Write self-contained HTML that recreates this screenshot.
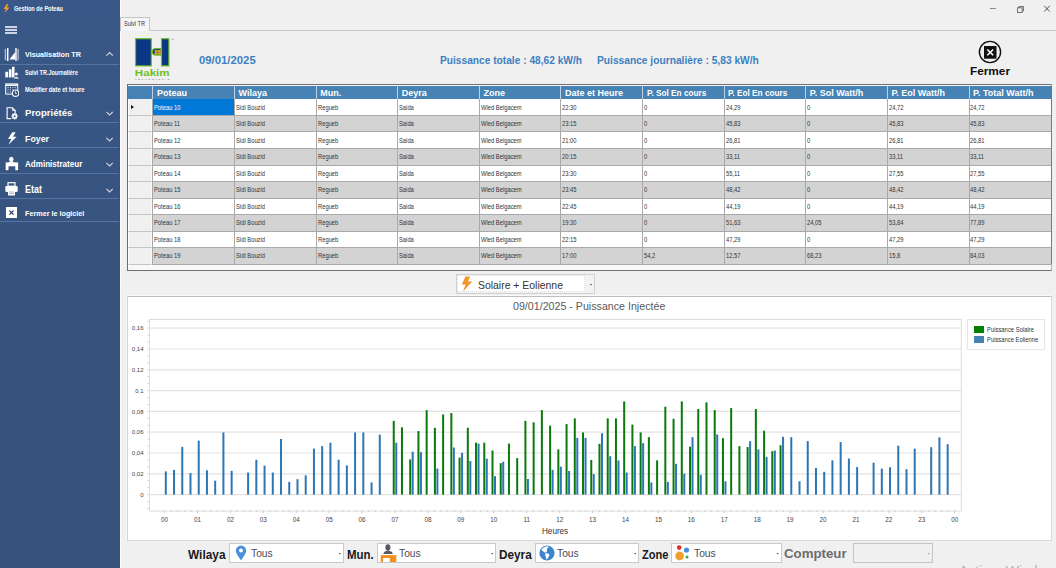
<!DOCTYPE html><html><head><meta charset="utf-8"><style>
*{margin:0;padding:0;box-sizing:border-box}
html,body{width:1056px;height:568px;overflow:hidden;background:#f0f0f0;font-family:"Liberation Sans",sans-serif}
.t{position:absolute;white-space:nowrap;line-height:1;transform-origin:0 0}
.a{position:absolute}
#sb{position:absolute;left:0;top:0;width:119.6px;height:568px;background:linear-gradient(180deg,#395887 0%,#37547f 40%,#36537e 100%)}
.sep{position:absolute;left:0;width:119px;height:1px;background:#5573a3}
.th{position:absolute;top:85.5px;height:13.9px;background:#4682b4;border-left:1px solid #bcd2e6}
.td{position:absolute;height:16.53px;border-left:1px solid #a9a9a9;border-bottom:1px solid #a9a9a9}
.td.odd{background:#fff}
.td.even{background:#d3d3d3}
.td.sel{background:#0078d7}
.rh{position:absolute;left:128px;width:24.3px;height:16.53px;background:#f0f0f0;border-bottom:1px solid #c4c4c4;border-left:1px solid #fff;border-right:1px solid #f8f8f8}
.arr{position:absolute;left:2.3px;top:5.4px;width:0;height:0;border-top:2.7px solid transparent;border-bottom:2.7px solid transparent;border-left:3.4px solid #111}
.yl{font-family:"Liberation Sans",sans-serif;font-size:6px;fill:#444}
.xl{font-family:"Liberation Sans",sans-serif;font-size:6.3px;fill:#444}
.combo{position:absolute;background:#fff;border:1px solid #c9c9c9}
.dd{position:absolute;width:3px;height:2px;background:#444;clip-path:polygon(0 0,100% 0,50% 100%)}
</style></head><body><div id="sb"></div><svg class="a" style="left:3px;top:4px" width="7" height="9" viewBox="0 0 7 9"><path d="M3.8 0 L0.6 5 L3 5 L1.8 9 L6.4 3.6 L3.9 3.6 L5.2 0 Z" fill="#f0a030"/></svg><div class="t" style="left:14.00px;top:6.14px;font-size:6.8px;font-weight:bold;color:#ffffff;transform:scaleX(0.8208);">Gestion de Poteau</div><div class="a" style="left:5.2px;top:26.4px;width:11.4px;height:1.2px;background:#cdd5e2"></div><div class="a" style="left:5.2px;top:29.4px;width:11.4px;height:1.2px;background:#cdd5e2"></div><div class="a" style="left:5.2px;top:32.4px;width:11.4px;height:1.2px;background:#cdd5e2"></div><div class="sep" style="top:63.6px"></div><div class="sep" style="top:121.8px"></div><div class="sep" style="top:147.4px"></div><div class="sep" style="top:172.5px"></div><div class="sep" style="top:198.3px"></div><div class="sep" style="top:220.5px"></div><svg class="a" style="left:4px;top:47px" width="15" height="15" viewBox="0 0 15 15"><path d="M1.3 2 V13.2" stroke="#e6ebf3" stroke-width="0.9"/><path d="M3.7 1 V14" stroke="#fff" stroke-width="1.5"/><path d="M5.4 12.6 L11.3 5 V12.6 Z" fill="#fff"/><path d="M12 1 V14" stroke="#fff" stroke-width="1.4"/><path d="M14.1 2 V13.2" stroke="#e6ebf3" stroke-width="0.9"/></svg><div class="t" style="left:24.60px;top:51.00px;font-size:7.8px;font-weight:bold;color:#ffffff;transform:scaleX(0.9250);">Visualisation TR</div><svg class="a" style="left:105px;top:51px" width="9" height="6" viewBox="0 0 9 6"><path d="M1.4 4.6 L4.6 1.5 L7.8 4.6" fill="none" stroke="#d0d8e6" stroke-width="1.1"/></svg><svg class="a" style="left:4.5px;top:65.5px" width="14" height="13" viewBox="0 0 14 13"><rect x="0.3" y="5.8" width="2.8" height="5.6" fill="#fff"/><rect x="3.9" y="3.3" width="2.6" height="8.1" fill="#fff"/><rect x="7" y="0.8" width="2.5" height="10.6" fill="#fff"/><circle cx="11.4" cy="8" r="1.5" fill="#fff"/><path d="M8.6 12.4 Q11.4 9.6 14 12.4 Z" fill="#fff"/></svg><div class="t" style="left:24.60px;top:69.91px;font-size:6.6px;font-weight:bold;color:#ffffff;transform:scaleX(0.8305);">Suivi TR.Journalière</div><svg class="a" style="left:4.5px;top:82.5px" width="14" height="14" viewBox="0 0 14 14"><rect x="0.7" y="0.9" width="12" height="10.2" fill="none" stroke="#fff" stroke-width="1"/><path d="M0.7 2.2 H12.7" stroke="#fff" stroke-width="1.6"/><path d="M2.5 4.6 H3.6 M4.9 4.6 H6 M7.3 4.6 H8.4 M9.7 4.6 H10.8 M2.5 6.8 H3.6 M4.9 6.8 H6 M7.3 6.8 H8.4 M2.5 9 H3.6 M4.9 9 H6" stroke="#dfe6f0" stroke-width="0.9"/><circle cx="10.6" cy="10.2" r="3.2" fill="#37547f" stroke="#fff" stroke-width="1.1"/><path d="M10.5 8.4 V10.4 H12" stroke="#fff" stroke-width="0.8" fill="none"/></svg><div class="t" style="left:24.60px;top:86.07px;font-size:7px;font-weight:bold;color:#ffffff;transform:scaleX(0.8167);">Modifier date et heure</div><svg class="a" style="left:5.5px;top:106.5px" width="13" height="13" viewBox="0 0 13 13"><path d="M5.2 11.6 H1.1 V0.8 H6.4 L9.2 3.6 V6.2" fill="none" stroke="#fff" stroke-width="1.1"/><path d="M6.4 0.8 V3.6 H9.2" fill="none" stroke="#fff" stroke-width="0.8"/><g transform="translate(8.6 9.3)"><path d="M-0.6 -3.3 H0.6 L0.8 -2.4 L1.7 -2.9 L2.6 -2 L2.1 -1.1 L3.1 -0.8 V0.5 L2.1 0.8 L2.6 1.8 L1.7 2.7 L0.8 2.2 L0.6 3.2 H-0.6 L-0.8 2.2 L-1.7 2.7 L-2.6 1.8 L-2.1 0.8 L-3.1 0.5 V-0.8 L-2.1 -1.1 L-2.6 -2 L-1.7 -2.9 L-0.8 -2.4 Z" fill="#fff"/><circle r="1" fill="#37547f"/></g></svg><div class="t" style="left:24.60px;top:108.17px;font-size:9.6px;font-weight:bold;color:#ffffff;transform:scaleX(0.9982);">Propriétés</div><svg class="a" style="left:105px;top:110px" width="9" height="6" viewBox="0 0 9 6"><path d="M1.4 1.8 L4.6 4.9 L7.8 1.8" fill="none" stroke="#d0d8e6" stroke-width="1.1"/></svg><svg class="a" style="left:6.5px;top:131.8px" width="11" height="13" viewBox="0 0 11 13"><path d="M5.2 0.3 L1 7 L4.4 7 L1.4 12.7 L9.6 4.8 L6 4.8 L8.6 0.3 Z" fill="#fff"/></svg><div class="t" style="left:24.60px;top:134.51px;font-size:9.2px;font-weight:bold;color:#ffffff;transform:scaleX(0.9580);">Foyer</div><svg class="a" style="left:105px;top:136px" width="9" height="6" viewBox="0 0 9 6"><path d="M1.4 1.8 L4.6 4.9 L7.8 1.8" fill="none" stroke="#d0d8e6" stroke-width="1.1"/></svg><svg class="a" style="left:4.5px;top:156px" width="14" height="15" viewBox="0 0 14 15"><ellipse cx="6.3" cy="3.4" rx="2.2" ry="2.6" fill="#fff"/><path d="M2.8 6.8 Q6.3 4.3 9.8 6.8 Z" fill="#fff"/><rect x="0.7" y="6.4" width="12.4" height="3.9" fill="#fff"/><rect x="0.7" y="10" width="2.8" height="4.2" fill="#fff"/><rect x="10.3" y="10" width="2.8" height="4.2" fill="#fff"/></svg><div class="t" style="left:24.60px;top:159.61px;font-size:9.2px;font-weight:bold;color:#ffffff;transform:scaleX(0.8772);">Administrateur</div><svg class="a" style="left:105px;top:161px" width="9" height="6" viewBox="0 0 9 6"><path d="M1.4 1.8 L4.6 4.9 L7.8 1.8" fill="none" stroke="#d0d8e6" stroke-width="1.1"/></svg><svg class="a" style="left:5px;top:181.5px" width="13" height="14" viewBox="0 0 13 14"><rect x="3" y="0.7" width="7" height="3.5" fill="none" stroke="#fff" stroke-width="1.2"/><rect x="0.3" y="4" width="12.4" height="6" rx="1.2" fill="#fff"/><rect x="3" y="8.5" width="7" height="5" fill="#fff"/><path d="M4.2 10 H8.8 M4.2 11.7 H8.8" stroke="#8a9ab5" stroke-width="0.7"/></svg><div class="t" style="left:24.60px;top:184.63px;font-size:10px;font-weight:bold;color:#ffffff;transform:scaleX(0.8998);">Etat</div><svg class="a" style="left:105px;top:187px" width="9" height="6" viewBox="0 0 9 6"><path d="M1.4 1.8 L4.6 4.9 L7.8 1.8" fill="none" stroke="#d0d8e6" stroke-width="1.1"/></svg><svg class="a" style="left:6px;top:207.3px" width="11" height="11" viewBox="0 0 11 11"><rect x="0" y="0" width="11" height="11" fill="#fff"/><path d="M3.4 3.6 L7.6 7.6 M7.6 3.6 L3.4 7.6" stroke="#2a3f66" stroke-width="1.3"/></svg><div class="t" style="left:24.60px;top:209.77px;font-size:7.6px;font-weight:bold;color:#ffffff;transform:scaleX(0.9502);">Fermer le logiciel</div><div class="a" style="left:119.5px;top:0;width:1px;height:568px;background:#fafafa"></div><div class="a" style="left:990px;top:8px;width:6px;height:1px;background:#8a8a8a"></div><svg class="a" style="left:1016.5px;top:5.5px" width="7" height="7" viewBox="0 0 7 7"><rect x="0.5" y="1.8" width="4.6" height="4.7" fill="none" stroke="#666" stroke-width="0.9"/><path d="M1.9 1.8 V0.5 H6.5 V5 H5.1" fill="none" stroke="#666" stroke-width="0.9"/></svg><svg class="a" style="left:1042.5px;top:5px" width="8" height="8" viewBox="0 0 8 8"><path d="M1.2 0.8 L6.8 6.6 M6.8 0.8 L1.2 6.6" stroke="#444" stroke-width="0.9"/></svg><div class="a" style="left:120px;top:16.8px;width:30px;height:14px;background:#f5f5f5;border:1px solid #c4c4c4;border-bottom:none"></div><div class="a" style="left:149.5px;top:29.6px;width:907px;height:1.2px;background:#c9c9c9"></div><div class="t" style="left:124.00px;top:20.58px;font-size:6.4px;color:#333;transform:scaleX(0.8726);">Suivi TR</div><svg class="a" style="left:133px;top:36px" width="44" height="46" viewBox="0 0 44 46">
<rect x="2.55" y="2.7" width="15.75" height="27.2" fill="#0c3585" stroke="#6cc020" stroke-width="1.15"/>
<rect x="28.5" y="2.7" width="7.4" height="27.2" fill="#0c3585" stroke="#6cc020" stroke-width="1.15"/>
<path d="M22.6 12.5 A3.3 3.3 0 0 0 22.6 19.1 H28 V12.5 Z" fill="#0c3585" stroke="#6cc020" stroke-width="1.2"/>
<rect x="21.7" y="13.9" width="6.1" height="4.8" fill="#d9a836"/>
<path d="M21.7 16.3 H27.8 M24.7 13.9 V18.7" stroke="#7a5a20" stroke-width="0.5"/>
<circle cx="39.7" cy="3.3" r="0.9" fill="#aaa"/>
<text x="1.85" y="40.3" font-family="Liberation Sans" font-weight="bold" font-size="9.8" fill="#6cc020" textLength="34.75" lengthAdjust="spacingAndGlyphs">Hakim</text>
<text x="2" y="44.3" font-family="Liberation Sans" font-size="2.4" fill="#555" textLength="34.3" lengthAdjust="spacing">TECHNOLOGIE</text>
</svg><div class="t" style="left:198.75px;top:54.92px;font-size:11.2px;font-weight:bold;color:#3d80c0;transform:scaleX(1.0124);">09/01/2025</div><div class="t" style="left:439.75px;top:55.57px;font-size:10.2px;font-weight:bold;color:#3d80c0;transform:scaleX(0.9994);">Puissance totale : 48,62 kW/h</div><div class="t" style="left:597.00px;top:55.57px;font-size:10.2px;font-weight:bold;color:#3d80c0;transform:scaleX(1.0027);">Puissance journalière : 5,83 kW/h</div><svg class="a" style="left:978px;top:40px" width="24" height="24" viewBox="0 0 24 24"><circle cx="12" cy="12" r="10.6" fill="none" stroke="#111" stroke-width="1.4"/><rect x="6" y="6" width="12.5" height="12.7" fill="#111"/><path d="M9.3 9.5 L15.2 15.3 M15.2 9.5 L9.3 15.3" stroke="#fff" stroke-width="1.6"/></svg><div class="t" style="left:970.25px;top:66.03px;font-size:11.3px;font-weight:bold;color:#111;transform:scaleX(1.0440);">Fermer</div><div class="a" style="left:127.3px;top:83.7px;width:925px;height:187.4px;background:#f8f8f8;border:1px solid #6e6e6e;border-right-color:#b9b9b9"></div><div class="a" style="left:128px;top:85.5px;width:24.3px;height:13.9px;background:#4682b4"></div><div class="th" style="left:152.3px;width:82.7px"></div>
<div class="th" style="left:234.0px;width:82.6px"></div>
<div class="th" style="left:315.6px;width:82.6px"></div>
<div class="th" style="left:397.2px;width:82.6px"></div>
<div class="th" style="left:478.8px;width:82.6px"></div>
<div class="th" style="left:560.4px;width:82.6px"></div>
<div class="th" style="left:642.0px;width:82.6px"></div>
<div class="th" style="left:723.7px;width:82.6px"></div>
<div class="th" style="left:805.3px;width:82.6px"></div>
<div class="th" style="left:886.9px;width:82.6px"></div>
<div class="th" style="left:968.5px;width:83.0px"></div>
<div class="rh" style="top:99.40px"><span class=arr></span></div>
<div class="td odd sel" style="left:152.3px;top:99.40px;width:82.7px"></div>
<div class="td odd" style="left:234.0px;top:99.40px;width:82.6px"></div>
<div class="td odd" style="left:315.6px;top:99.40px;width:82.6px"></div>
<div class="td odd" style="left:397.2px;top:99.40px;width:82.6px"></div>
<div class="td odd" style="left:478.8px;top:99.40px;width:82.6px"></div>
<div class="td odd" style="left:560.4px;top:99.40px;width:82.6px"></div>
<div class="td odd" style="left:642.0px;top:99.40px;width:82.6px"></div>
<div class="td odd" style="left:723.7px;top:99.40px;width:82.6px"></div>
<div class="td odd" style="left:805.3px;top:99.40px;width:82.6px"></div>
<div class="td odd" style="left:886.9px;top:99.40px;width:82.6px"></div>
<div class="td odd" style="left:968.5px;top:99.40px;width:83.0px"></div>
<div class="rh" style="top:115.93px"></div>
<div class="td even" style="left:152.3px;top:115.93px;width:82.7px"></div>
<div class="td even" style="left:234.0px;top:115.93px;width:82.6px"></div>
<div class="td even" style="left:315.6px;top:115.93px;width:82.6px"></div>
<div class="td even" style="left:397.2px;top:115.93px;width:82.6px"></div>
<div class="td even" style="left:478.8px;top:115.93px;width:82.6px"></div>
<div class="td even" style="left:560.4px;top:115.93px;width:82.6px"></div>
<div class="td even" style="left:642.0px;top:115.93px;width:82.6px"></div>
<div class="td even" style="left:723.7px;top:115.93px;width:82.6px"></div>
<div class="td even" style="left:805.3px;top:115.93px;width:82.6px"></div>
<div class="td even" style="left:886.9px;top:115.93px;width:82.6px"></div>
<div class="td even" style="left:968.5px;top:115.93px;width:83.0px"></div>
<div class="rh" style="top:132.46px"></div>
<div class="td odd" style="left:152.3px;top:132.46px;width:82.7px"></div>
<div class="td odd" style="left:234.0px;top:132.46px;width:82.6px"></div>
<div class="td odd" style="left:315.6px;top:132.46px;width:82.6px"></div>
<div class="td odd" style="left:397.2px;top:132.46px;width:82.6px"></div>
<div class="td odd" style="left:478.8px;top:132.46px;width:82.6px"></div>
<div class="td odd" style="left:560.4px;top:132.46px;width:82.6px"></div>
<div class="td odd" style="left:642.0px;top:132.46px;width:82.6px"></div>
<div class="td odd" style="left:723.7px;top:132.46px;width:82.6px"></div>
<div class="td odd" style="left:805.3px;top:132.46px;width:82.6px"></div>
<div class="td odd" style="left:886.9px;top:132.46px;width:82.6px"></div>
<div class="td odd" style="left:968.5px;top:132.46px;width:83.0px"></div>
<div class="rh" style="top:148.99px"></div>
<div class="td even" style="left:152.3px;top:148.99px;width:82.7px"></div>
<div class="td even" style="left:234.0px;top:148.99px;width:82.6px"></div>
<div class="td even" style="left:315.6px;top:148.99px;width:82.6px"></div>
<div class="td even" style="left:397.2px;top:148.99px;width:82.6px"></div>
<div class="td even" style="left:478.8px;top:148.99px;width:82.6px"></div>
<div class="td even" style="left:560.4px;top:148.99px;width:82.6px"></div>
<div class="td even" style="left:642.0px;top:148.99px;width:82.6px"></div>
<div class="td even" style="left:723.7px;top:148.99px;width:82.6px"></div>
<div class="td even" style="left:805.3px;top:148.99px;width:82.6px"></div>
<div class="td even" style="left:886.9px;top:148.99px;width:82.6px"></div>
<div class="td even" style="left:968.5px;top:148.99px;width:83.0px"></div>
<div class="rh" style="top:165.52px"></div>
<div class="td odd" style="left:152.3px;top:165.52px;width:82.7px"></div>
<div class="td odd" style="left:234.0px;top:165.52px;width:82.6px"></div>
<div class="td odd" style="left:315.6px;top:165.52px;width:82.6px"></div>
<div class="td odd" style="left:397.2px;top:165.52px;width:82.6px"></div>
<div class="td odd" style="left:478.8px;top:165.52px;width:82.6px"></div>
<div class="td odd" style="left:560.4px;top:165.52px;width:82.6px"></div>
<div class="td odd" style="left:642.0px;top:165.52px;width:82.6px"></div>
<div class="td odd" style="left:723.7px;top:165.52px;width:82.6px"></div>
<div class="td odd" style="left:805.3px;top:165.52px;width:82.6px"></div>
<div class="td odd" style="left:886.9px;top:165.52px;width:82.6px"></div>
<div class="td odd" style="left:968.5px;top:165.52px;width:83.0px"></div>
<div class="rh" style="top:182.05px"></div>
<div class="td even" style="left:152.3px;top:182.05px;width:82.7px"></div>
<div class="td even" style="left:234.0px;top:182.05px;width:82.6px"></div>
<div class="td even" style="left:315.6px;top:182.05px;width:82.6px"></div>
<div class="td even" style="left:397.2px;top:182.05px;width:82.6px"></div>
<div class="td even" style="left:478.8px;top:182.05px;width:82.6px"></div>
<div class="td even" style="left:560.4px;top:182.05px;width:82.6px"></div>
<div class="td even" style="left:642.0px;top:182.05px;width:82.6px"></div>
<div class="td even" style="left:723.7px;top:182.05px;width:82.6px"></div>
<div class="td even" style="left:805.3px;top:182.05px;width:82.6px"></div>
<div class="td even" style="left:886.9px;top:182.05px;width:82.6px"></div>
<div class="td even" style="left:968.5px;top:182.05px;width:83.0px"></div>
<div class="rh" style="top:198.58px"></div>
<div class="td odd" style="left:152.3px;top:198.58px;width:82.7px"></div>
<div class="td odd" style="left:234.0px;top:198.58px;width:82.6px"></div>
<div class="td odd" style="left:315.6px;top:198.58px;width:82.6px"></div>
<div class="td odd" style="left:397.2px;top:198.58px;width:82.6px"></div>
<div class="td odd" style="left:478.8px;top:198.58px;width:82.6px"></div>
<div class="td odd" style="left:560.4px;top:198.58px;width:82.6px"></div>
<div class="td odd" style="left:642.0px;top:198.58px;width:82.6px"></div>
<div class="td odd" style="left:723.7px;top:198.58px;width:82.6px"></div>
<div class="td odd" style="left:805.3px;top:198.58px;width:82.6px"></div>
<div class="td odd" style="left:886.9px;top:198.58px;width:82.6px"></div>
<div class="td odd" style="left:968.5px;top:198.58px;width:83.0px"></div>
<div class="rh" style="top:215.11px"></div>
<div class="td even" style="left:152.3px;top:215.11px;width:82.7px"></div>
<div class="td even" style="left:234.0px;top:215.11px;width:82.6px"></div>
<div class="td even" style="left:315.6px;top:215.11px;width:82.6px"></div>
<div class="td even" style="left:397.2px;top:215.11px;width:82.6px"></div>
<div class="td even" style="left:478.8px;top:215.11px;width:82.6px"></div>
<div class="td even" style="left:560.4px;top:215.11px;width:82.6px"></div>
<div class="td even" style="left:642.0px;top:215.11px;width:82.6px"></div>
<div class="td even" style="left:723.7px;top:215.11px;width:82.6px"></div>
<div class="td even" style="left:805.3px;top:215.11px;width:82.6px"></div>
<div class="td even" style="left:886.9px;top:215.11px;width:82.6px"></div>
<div class="td even" style="left:968.5px;top:215.11px;width:83.0px"></div>
<div class="rh" style="top:231.64px"></div>
<div class="td odd" style="left:152.3px;top:231.64px;width:82.7px"></div>
<div class="td odd" style="left:234.0px;top:231.64px;width:82.6px"></div>
<div class="td odd" style="left:315.6px;top:231.64px;width:82.6px"></div>
<div class="td odd" style="left:397.2px;top:231.64px;width:82.6px"></div>
<div class="td odd" style="left:478.8px;top:231.64px;width:82.6px"></div>
<div class="td odd" style="left:560.4px;top:231.64px;width:82.6px"></div>
<div class="td odd" style="left:642.0px;top:231.64px;width:82.6px"></div>
<div class="td odd" style="left:723.7px;top:231.64px;width:82.6px"></div>
<div class="td odd" style="left:805.3px;top:231.64px;width:82.6px"></div>
<div class="td odd" style="left:886.9px;top:231.64px;width:82.6px"></div>
<div class="td odd" style="left:968.5px;top:231.64px;width:83.0px"></div>
<div class="rh" style="top:248.17px"></div>
<div class="td even" style="left:152.3px;top:248.17px;width:82.7px"></div>
<div class="td even" style="left:234.0px;top:248.17px;width:82.6px"></div>
<div class="td even" style="left:315.6px;top:248.17px;width:82.6px"></div>
<div class="td even" style="left:397.2px;top:248.17px;width:82.6px"></div>
<div class="td even" style="left:478.8px;top:248.17px;width:82.6px"></div>
<div class="td even" style="left:560.4px;top:248.17px;width:82.6px"></div>
<div class="td even" style="left:642.0px;top:248.17px;width:82.6px"></div>
<div class="td even" style="left:723.7px;top:248.17px;width:82.6px"></div>
<div class="td even" style="left:805.3px;top:248.17px;width:82.6px"></div>
<div class="td even" style="left:886.9px;top:248.17px;width:82.6px"></div>
<div class="td even" style="left:968.5px;top:248.17px;width:83.0px"></div><div class="t" style="left:156.90px;top:88.58px;font-size:9px;font-weight:bold;color:#fff;transform:scaleX(1.0000);">Poteau</div><div class="t" style="left:238.60px;top:88.58px;font-size:9px;font-weight:bold;color:#fff;transform:scaleX(1.0000);">Wilaya</div><div class="t" style="left:320.21px;top:88.58px;font-size:9px;font-weight:bold;color:#fff;transform:scaleX(1.0000);">Mun.</div><div class="t" style="left:401.82px;top:88.58px;font-size:9px;font-weight:bold;color:#fff;transform:scaleX(1.0000);">Deyra</div><div class="t" style="left:483.43px;top:88.58px;font-size:9px;font-weight:bold;color:#fff;transform:scaleX(1.0000);">Zone</div><div class="t" style="left:565.04px;top:88.58px;font-size:9px;font-weight:bold;color:#fff;transform:scaleX(1.0000);">Date et Heure</div><div class="t" style="left:646.65px;top:88.58px;font-size:9px;font-weight:bold;color:#fff;transform:scaleX(0.9150);">P. Sol En cours</div><div class="t" style="left:728.26px;top:88.58px;font-size:9px;font-weight:bold;color:#fff;transform:scaleX(0.9150);">P. Eol En cours</div><div class="t" style="left:809.87px;top:88.58px;font-size:9px;font-weight:bold;color:#fff;transform:scaleX(1.0000);">P. Sol Watt/h</div><div class="t" style="left:891.48px;top:88.58px;font-size:9px;font-weight:bold;color:#fff;transform:scaleX(1.0000);">P. Eol Watt/h</div><div class="t" style="left:973.09px;top:88.58px;font-size:9px;font-weight:bold;color:#fff;transform:scaleX(1.0000);">P. Total Watt/h</div><div class="t" style="left:154.30px;top:104.71px;font-size:6.6px;color:#fff;transform:scaleX(0.8800);">Poteau 10</div><div class="t" style="left:236.00px;top:104.71px;font-size:6.6px;color:#333;transform:scaleX(0.8800);">Sidi Bouzid</div><div class="t" style="left:317.61px;top:104.71px;font-size:6.6px;color:#333;transform:scaleX(0.8800);">Regueb</div><div class="t" style="left:399.22px;top:104.71px;font-size:6.6px;color:#333;transform:scaleX(0.8800);">Saida</div><div class="t" style="left:480.83px;top:104.71px;font-size:6.6px;color:#333;transform:scaleX(0.8800);">Wled Belgacem</div><div class="t" style="left:562.44px;top:104.71px;font-size:6.6px;color:#333;transform:scaleX(0.8800);">22:30</div><div class="t" style="left:644.05px;top:104.71px;font-size:6.6px;color:#333;transform:scaleX(0.8800);">0</div><div class="t" style="left:725.66px;top:104.71px;font-size:6.6px;color:#333;transform:scaleX(0.8800);">24,29</div><div class="t" style="left:807.27px;top:104.71px;font-size:6.6px;color:#333;transform:scaleX(0.8800);">0</div><div class="t" style="left:888.88px;top:104.71px;font-size:6.6px;color:#333;transform:scaleX(0.8800);">24,72</div><div class="t" style="left:970.49px;top:104.71px;font-size:6.6px;color:#333;transform:scaleX(0.8800);">24,72</div><div class="t" style="left:154.30px;top:121.24px;font-size:6.6px;color:#333;transform:scaleX(0.8800);">Poteau 11</div><div class="t" style="left:236.00px;top:121.24px;font-size:6.6px;color:#333;transform:scaleX(0.8800);">Sidi Bouzid</div><div class="t" style="left:317.61px;top:121.24px;font-size:6.6px;color:#333;transform:scaleX(0.8800);">Regueb</div><div class="t" style="left:399.22px;top:121.24px;font-size:6.6px;color:#333;transform:scaleX(0.8800);">Saida</div><div class="t" style="left:480.83px;top:121.24px;font-size:6.6px;color:#333;transform:scaleX(0.8800);">Wled Belgacem</div><div class="t" style="left:562.44px;top:121.24px;font-size:6.6px;color:#333;transform:scaleX(0.8800);">23:15</div><div class="t" style="left:644.05px;top:121.24px;font-size:6.6px;color:#333;transform:scaleX(0.8800);">0</div><div class="t" style="left:725.66px;top:121.24px;font-size:6.6px;color:#333;transform:scaleX(0.8800);">45,83</div><div class="t" style="left:807.27px;top:121.24px;font-size:6.6px;color:#333;transform:scaleX(0.8800);">0</div><div class="t" style="left:888.88px;top:121.24px;font-size:6.6px;color:#333;transform:scaleX(0.8800);">45,83</div><div class="t" style="left:970.49px;top:121.24px;font-size:6.6px;color:#333;transform:scaleX(0.8800);">45,83</div><div class="t" style="left:154.30px;top:137.77px;font-size:6.6px;color:#333;transform:scaleX(0.8800);">Poteau 12</div><div class="t" style="left:236.00px;top:137.77px;font-size:6.6px;color:#333;transform:scaleX(0.8800);">Sidi Bouzid</div><div class="t" style="left:317.61px;top:137.77px;font-size:6.6px;color:#333;transform:scaleX(0.8800);">Regueb</div><div class="t" style="left:399.22px;top:137.77px;font-size:6.6px;color:#333;transform:scaleX(0.8800);">Saida</div><div class="t" style="left:480.83px;top:137.77px;font-size:6.6px;color:#333;transform:scaleX(0.8800);">Wled Belgacem</div><div class="t" style="left:562.44px;top:137.77px;font-size:6.6px;color:#333;transform:scaleX(0.8800);">21:00</div><div class="t" style="left:644.05px;top:137.77px;font-size:6.6px;color:#333;transform:scaleX(0.8800);">0</div><div class="t" style="left:725.66px;top:137.77px;font-size:6.6px;color:#333;transform:scaleX(0.8800);">26,81</div><div class="t" style="left:807.27px;top:137.77px;font-size:6.6px;color:#333;transform:scaleX(0.8800);">0</div><div class="t" style="left:888.88px;top:137.77px;font-size:6.6px;color:#333;transform:scaleX(0.8800);">26,81</div><div class="t" style="left:970.49px;top:137.77px;font-size:6.6px;color:#333;transform:scaleX(0.8800);">26,81</div><div class="t" style="left:154.30px;top:154.30px;font-size:6.6px;color:#333;transform:scaleX(0.8800);">Poteau 13</div><div class="t" style="left:236.00px;top:154.30px;font-size:6.6px;color:#333;transform:scaleX(0.8800);">Sidi Bouzid</div><div class="t" style="left:317.61px;top:154.30px;font-size:6.6px;color:#333;transform:scaleX(0.8800);">Regueb</div><div class="t" style="left:399.22px;top:154.30px;font-size:6.6px;color:#333;transform:scaleX(0.8800);">Saida</div><div class="t" style="left:480.83px;top:154.30px;font-size:6.6px;color:#333;transform:scaleX(0.8800);">Wled Belgacem</div><div class="t" style="left:562.44px;top:154.30px;font-size:6.6px;color:#333;transform:scaleX(0.8800);">20:15</div><div class="t" style="left:644.05px;top:154.30px;font-size:6.6px;color:#333;transform:scaleX(0.8800);">0</div><div class="t" style="left:725.66px;top:154.30px;font-size:6.6px;color:#333;transform:scaleX(0.8800);">33,11</div><div class="t" style="left:807.27px;top:154.30px;font-size:6.6px;color:#333;transform:scaleX(0.8800);">0</div><div class="t" style="left:888.88px;top:154.30px;font-size:6.6px;color:#333;transform:scaleX(0.8800);">33,11</div><div class="t" style="left:970.49px;top:154.30px;font-size:6.6px;color:#333;transform:scaleX(0.8800);">33,11</div><div class="t" style="left:154.30px;top:170.83px;font-size:6.6px;color:#333;transform:scaleX(0.8800);">Poteau 14</div><div class="t" style="left:236.00px;top:170.83px;font-size:6.6px;color:#333;transform:scaleX(0.8800);">Sidi Bouzid</div><div class="t" style="left:317.61px;top:170.83px;font-size:6.6px;color:#333;transform:scaleX(0.8800);">Regueb</div><div class="t" style="left:399.22px;top:170.83px;font-size:6.6px;color:#333;transform:scaleX(0.8800);">Saida</div><div class="t" style="left:480.83px;top:170.83px;font-size:6.6px;color:#333;transform:scaleX(0.8800);">Wled Belgacem</div><div class="t" style="left:562.44px;top:170.83px;font-size:6.6px;color:#333;transform:scaleX(0.8800);">23:30</div><div class="t" style="left:644.05px;top:170.83px;font-size:6.6px;color:#333;transform:scaleX(0.8800);">0</div><div class="t" style="left:725.66px;top:170.83px;font-size:6.6px;color:#333;transform:scaleX(0.8800);">55,11</div><div class="t" style="left:807.27px;top:170.83px;font-size:6.6px;color:#333;transform:scaleX(0.8800);">0</div><div class="t" style="left:888.88px;top:170.83px;font-size:6.6px;color:#333;transform:scaleX(0.8800);">27,55</div><div class="t" style="left:970.49px;top:170.83px;font-size:6.6px;color:#333;transform:scaleX(0.8800);">27,55</div><div class="t" style="left:154.30px;top:187.36px;font-size:6.6px;color:#333;transform:scaleX(0.8800);">Poteau 15</div><div class="t" style="left:236.00px;top:187.36px;font-size:6.6px;color:#333;transform:scaleX(0.8800);">Sidi Bouzid</div><div class="t" style="left:317.61px;top:187.36px;font-size:6.6px;color:#333;transform:scaleX(0.8800);">Regueb</div><div class="t" style="left:399.22px;top:187.36px;font-size:6.6px;color:#333;transform:scaleX(0.8800);">Saida</div><div class="t" style="left:480.83px;top:187.36px;font-size:6.6px;color:#333;transform:scaleX(0.8800);">Wled Belgacem</div><div class="t" style="left:562.44px;top:187.36px;font-size:6.6px;color:#333;transform:scaleX(0.8800);">23:45</div><div class="t" style="left:644.05px;top:187.36px;font-size:6.6px;color:#333;transform:scaleX(0.8800);">0</div><div class="t" style="left:725.66px;top:187.36px;font-size:6.6px;color:#333;transform:scaleX(0.8800);">48,42</div><div class="t" style="left:807.27px;top:187.36px;font-size:6.6px;color:#333;transform:scaleX(0.8800);">0</div><div class="t" style="left:888.88px;top:187.36px;font-size:6.6px;color:#333;transform:scaleX(0.8800);">48,42</div><div class="t" style="left:970.49px;top:187.36px;font-size:6.6px;color:#333;transform:scaleX(0.8800);">48,42</div><div class="t" style="left:154.30px;top:203.89px;font-size:6.6px;color:#333;transform:scaleX(0.8800);">Poteau 16</div><div class="t" style="left:236.00px;top:203.89px;font-size:6.6px;color:#333;transform:scaleX(0.8800);">Sidi Bouzid</div><div class="t" style="left:317.61px;top:203.89px;font-size:6.6px;color:#333;transform:scaleX(0.8800);">Regueb</div><div class="t" style="left:399.22px;top:203.89px;font-size:6.6px;color:#333;transform:scaleX(0.8800);">Saida</div><div class="t" style="left:480.83px;top:203.89px;font-size:6.6px;color:#333;transform:scaleX(0.8800);">Wled Belgacem</div><div class="t" style="left:562.44px;top:203.89px;font-size:6.6px;color:#333;transform:scaleX(0.8800);">22:45</div><div class="t" style="left:644.05px;top:203.89px;font-size:6.6px;color:#333;transform:scaleX(0.8800);">0</div><div class="t" style="left:725.66px;top:203.89px;font-size:6.6px;color:#333;transform:scaleX(0.8800);">44,19</div><div class="t" style="left:807.27px;top:203.89px;font-size:6.6px;color:#333;transform:scaleX(0.8800);">0</div><div class="t" style="left:888.88px;top:203.89px;font-size:6.6px;color:#333;transform:scaleX(0.8800);">44,19</div><div class="t" style="left:970.49px;top:203.89px;font-size:6.6px;color:#333;transform:scaleX(0.8800);">44,19</div><div class="t" style="left:154.30px;top:220.42px;font-size:6.6px;color:#333;transform:scaleX(0.8800);">Poteau 17</div><div class="t" style="left:236.00px;top:220.42px;font-size:6.6px;color:#333;transform:scaleX(0.8800);">Sidi Bouzid</div><div class="t" style="left:317.61px;top:220.42px;font-size:6.6px;color:#333;transform:scaleX(0.8800);">Regueb</div><div class="t" style="left:399.22px;top:220.42px;font-size:6.6px;color:#333;transform:scaleX(0.8800);">Saida</div><div class="t" style="left:480.83px;top:220.42px;font-size:6.6px;color:#333;transform:scaleX(0.8800);">Wled Belgacem</div><div class="t" style="left:562.44px;top:220.42px;font-size:6.6px;color:#333;transform:scaleX(0.8800);">19:30</div><div class="t" style="left:644.05px;top:220.42px;font-size:6.6px;color:#333;transform:scaleX(0.8800);">0</div><div class="t" style="left:725.66px;top:220.42px;font-size:6.6px;color:#333;transform:scaleX(0.8800);">51,63</div><div class="t" style="left:807.27px;top:220.42px;font-size:6.6px;color:#333;transform:scaleX(0.8800);">24,05</div><div class="t" style="left:888.88px;top:220.42px;font-size:6.6px;color:#333;transform:scaleX(0.8800);">53,84</div><div class="t" style="left:970.49px;top:220.42px;font-size:6.6px;color:#333;transform:scaleX(0.8800);">77,89</div><div class="t" style="left:154.30px;top:236.95px;font-size:6.6px;color:#333;transform:scaleX(0.8800);">Poteau 18</div><div class="t" style="left:236.00px;top:236.95px;font-size:6.6px;color:#333;transform:scaleX(0.8800);">Sidi Bouzid</div><div class="t" style="left:317.61px;top:236.95px;font-size:6.6px;color:#333;transform:scaleX(0.8800);">Regueb</div><div class="t" style="left:399.22px;top:236.95px;font-size:6.6px;color:#333;transform:scaleX(0.8800);">Saida</div><div class="t" style="left:480.83px;top:236.95px;font-size:6.6px;color:#333;transform:scaleX(0.8800);">Wled Belgacem</div><div class="t" style="left:562.44px;top:236.95px;font-size:6.6px;color:#333;transform:scaleX(0.8800);">22:15</div><div class="t" style="left:644.05px;top:236.95px;font-size:6.6px;color:#333;transform:scaleX(0.8800);">0</div><div class="t" style="left:725.66px;top:236.95px;font-size:6.6px;color:#333;transform:scaleX(0.8800);">47,29</div><div class="t" style="left:807.27px;top:236.95px;font-size:6.6px;color:#333;transform:scaleX(0.8800);">0</div><div class="t" style="left:888.88px;top:236.95px;font-size:6.6px;color:#333;transform:scaleX(0.8800);">47,29</div><div class="t" style="left:970.49px;top:236.95px;font-size:6.6px;color:#333;transform:scaleX(0.8800);">47,29</div><div class="t" style="left:154.30px;top:253.48px;font-size:6.6px;color:#333;transform:scaleX(0.8800);">Poteau 19</div><div class="t" style="left:236.00px;top:253.48px;font-size:6.6px;color:#333;transform:scaleX(0.8800);">Sidi Bouzid</div><div class="t" style="left:317.61px;top:253.48px;font-size:6.6px;color:#333;transform:scaleX(0.8800);">Regueb</div><div class="t" style="left:399.22px;top:253.48px;font-size:6.6px;color:#333;transform:scaleX(0.8800);">Saida</div><div class="t" style="left:480.83px;top:253.48px;font-size:6.6px;color:#333;transform:scaleX(0.8800);">Wled Belgacem</div><div class="t" style="left:562.44px;top:253.48px;font-size:6.6px;color:#333;transform:scaleX(0.8800);">17:00</div><div class="t" style="left:644.05px;top:253.48px;font-size:6.6px;color:#333;transform:scaleX(0.8800);">54,2</div><div class="t" style="left:725.66px;top:253.48px;font-size:6.6px;color:#333;transform:scaleX(0.8800);">12,57</div><div class="t" style="left:807.27px;top:253.48px;font-size:6.6px;color:#333;transform:scaleX(0.8800);">68,23</div><div class="t" style="left:888.88px;top:253.48px;font-size:6.6px;color:#333;transform:scaleX(0.8800);">15,8</div><div class="t" style="left:970.49px;top:253.48px;font-size:6.6px;color:#333;transform:scaleX(0.8800);">84,03</div><div class="a" style="left:1050.8px;top:98px;width:1px;height:166.4px;background:#7a7a7a"></div><div class="a" style="left:455.5px;top:273.9px;width:139.5px;height:20px;background:#f3f3f3;border:1px solid #d0d0d0"></div><div class="a" style="left:457px;top:275.4px;width:128px;height:17px;background:#fff;border:1px dotted #dcdcdc"></div><div class="dd" style="left:589.5px;top:283.5px"></div><svg class="a" style="left:460px;top:275.5px" width="13" height="16" viewBox="0 0 13 16"><path d="M5.5 0.5 H10.2 L7.8 5.6 H12.3 L3 15.6 L5.6 8.6 H1.8 Z" fill="#f39428"/></svg><div class="t" style="left:477.50px;top:279.73px;font-size:10.6px;color:#333;transform:scaleX(0.9845);">Solaire + Eolienne</div><div class="a" style="left:127px;top:296px;width:925px;height:245px;background:#fff;border:1px solid #bdbdbd;border-left-color:#d4d4d4;border-right-color:#d9d9d9;border-bottom-color:#d9d9d9;box-shadow:-1px -1px 0 #fafafa"></div><div class="t" style="left:512.50px;top:300.94px;font-size:10.7px;color:#5a5a5a;transform:scaleX(0.9975);">09/01/2025 - Puissance Injectée</div><svg class="a" style="left:0;top:0" width="1056" height="568" viewBox="0 0 1056 568"><rect x="149.5" y="319.5" width="811.8" height="191.5" fill="none" stroke="#dcdcdc" stroke-width="1"/><line x1="147" y1="494.60" x2="961" y2="494.60" stroke="#e3e3e3" stroke-width="1.2"/>
<text x="143.5" y="496.80" text-anchor="end" class="yl">0</text>
<line x1="147" y1="473.80" x2="961" y2="473.80" stroke="#e3e3e3" stroke-width="1.2"/>
<text x="143.5" y="476.00" text-anchor="end" class="yl">0,02</text>
<line x1="147" y1="453.00" x2="961" y2="453.00" stroke="#e3e3e3" stroke-width="1.2"/>
<text x="143.5" y="455.20" text-anchor="end" class="yl">0,04</text>
<line x1="147" y1="432.20" x2="961" y2="432.20" stroke="#e3e3e3" stroke-width="1.2"/>
<text x="143.5" y="434.40" text-anchor="end" class="yl">0,06</text>
<line x1="147" y1="411.40" x2="961" y2="411.40" stroke="#e3e3e3" stroke-width="1.2"/>
<text x="143.5" y="413.60" text-anchor="end" class="yl">0,08</text>
<line x1="147" y1="390.60" x2="961" y2="390.60" stroke="#e3e3e3" stroke-width="1.2"/>
<text x="143.5" y="392.80" text-anchor="end" class="yl">0,1</text>
<line x1="147" y1="369.80" x2="961" y2="369.80" stroke="#e3e3e3" stroke-width="1.2"/>
<text x="143.5" y="372.00" text-anchor="end" class="yl">0,12</text>
<line x1="147" y1="349.00" x2="961" y2="349.00" stroke="#e3e3e3" stroke-width="1.2"/>
<text x="143.5" y="351.20" text-anchor="end" class="yl">0,14</text>
<line x1="147" y1="328.20" x2="961" y2="328.20" stroke="#e3e3e3" stroke-width="1.2"/>
<text x="143.5" y="330.40" text-anchor="end" class="yl">0,16</text>
<line x1="147.5" y1="508.47" x2="149.5" y2="508.47" stroke="#d0d0d0" stroke-width="1"/>
<line x1="147.5" y1="501.53" x2="149.5" y2="501.53" stroke="#d0d0d0" stroke-width="1"/>
<line x1="147.5" y1="487.67" x2="149.5" y2="487.67" stroke="#d0d0d0" stroke-width="1"/>
<line x1="147.5" y1="480.73" x2="149.5" y2="480.73" stroke="#d0d0d0" stroke-width="1"/>
<line x1="147.5" y1="466.87" x2="149.5" y2="466.87" stroke="#d0d0d0" stroke-width="1"/>
<line x1="147.5" y1="459.93" x2="149.5" y2="459.93" stroke="#d0d0d0" stroke-width="1"/>
<line x1="147.5" y1="446.07" x2="149.5" y2="446.07" stroke="#d0d0d0" stroke-width="1"/>
<line x1="147.5" y1="439.13" x2="149.5" y2="439.13" stroke="#d0d0d0" stroke-width="1"/>
<line x1="147.5" y1="425.27" x2="149.5" y2="425.27" stroke="#d0d0d0" stroke-width="1"/>
<line x1="147.5" y1="418.33" x2="149.5" y2="418.33" stroke="#d0d0d0" stroke-width="1"/>
<line x1="147.5" y1="404.47" x2="149.5" y2="404.47" stroke="#d0d0d0" stroke-width="1"/>
<line x1="147.5" y1="397.53" x2="149.5" y2="397.53" stroke="#d0d0d0" stroke-width="1"/>
<line x1="147.5" y1="383.67" x2="149.5" y2="383.67" stroke="#d0d0d0" stroke-width="1"/>
<line x1="147.5" y1="376.73" x2="149.5" y2="376.73" stroke="#d0d0d0" stroke-width="1"/>
<line x1="147.5" y1="362.87" x2="149.5" y2="362.87" stroke="#d0d0d0" stroke-width="1"/>
<line x1="147.5" y1="355.93" x2="149.5" y2="355.93" stroke="#d0d0d0" stroke-width="1"/>
<line x1="147.5" y1="342.07" x2="149.5" y2="342.07" stroke="#d0d0d0" stroke-width="1"/>
<line x1="147.5" y1="335.13" x2="149.5" y2="335.13" stroke="#d0d0d0" stroke-width="1"/>
<line x1="147.5" y1="321.27" x2="149.5" y2="321.27" stroke="#d0d0d0" stroke-width="1"/>
<line x1="164.60" y1="510.5" x2="164.60" y2="513.0" stroke="#c8c8c8" stroke-width="1"/>
<line x1="171.18" y1="510.5" x2="171.18" y2="512.0" stroke="#c8c8c8" stroke-width="1"/>
<line x1="177.77" y1="510.5" x2="177.77" y2="512.0" stroke="#c8c8c8" stroke-width="1"/>
<line x1="184.35" y1="510.5" x2="184.35" y2="512.0" stroke="#c8c8c8" stroke-width="1"/>
<line x1="190.94" y1="510.5" x2="190.94" y2="512.0" stroke="#c8c8c8" stroke-width="1"/>
<line x1="197.52" y1="510.5" x2="197.52" y2="513.0" stroke="#c8c8c8" stroke-width="1"/>
<line x1="204.10" y1="510.5" x2="204.10" y2="512.0" stroke="#c8c8c8" stroke-width="1"/>
<line x1="210.69" y1="510.5" x2="210.69" y2="512.0" stroke="#c8c8c8" stroke-width="1"/>
<line x1="217.27" y1="510.5" x2="217.27" y2="512.0" stroke="#c8c8c8" stroke-width="1"/>
<line x1="223.86" y1="510.5" x2="223.86" y2="512.0" stroke="#c8c8c8" stroke-width="1"/>
<line x1="230.44" y1="510.5" x2="230.44" y2="513.0" stroke="#c8c8c8" stroke-width="1"/>
<line x1="237.02" y1="510.5" x2="237.02" y2="512.0" stroke="#c8c8c8" stroke-width="1"/>
<line x1="243.61" y1="510.5" x2="243.61" y2="512.0" stroke="#c8c8c8" stroke-width="1"/>
<line x1="250.19" y1="510.5" x2="250.19" y2="512.0" stroke="#c8c8c8" stroke-width="1"/>
<line x1="256.78" y1="510.5" x2="256.78" y2="512.0" stroke="#c8c8c8" stroke-width="1"/>
<line x1="263.36" y1="510.5" x2="263.36" y2="513.0" stroke="#c8c8c8" stroke-width="1"/>
<line x1="269.94" y1="510.5" x2="269.94" y2="512.0" stroke="#c8c8c8" stroke-width="1"/>
<line x1="276.53" y1="510.5" x2="276.53" y2="512.0" stroke="#c8c8c8" stroke-width="1"/>
<line x1="283.11" y1="510.5" x2="283.11" y2="512.0" stroke="#c8c8c8" stroke-width="1"/>
<line x1="289.70" y1="510.5" x2="289.70" y2="512.0" stroke="#c8c8c8" stroke-width="1"/>
<line x1="296.28" y1="510.5" x2="296.28" y2="513.0" stroke="#c8c8c8" stroke-width="1"/>
<line x1="302.86" y1="510.5" x2="302.86" y2="512.0" stroke="#c8c8c8" stroke-width="1"/>
<line x1="309.45" y1="510.5" x2="309.45" y2="512.0" stroke="#c8c8c8" stroke-width="1"/>
<line x1="316.03" y1="510.5" x2="316.03" y2="512.0" stroke="#c8c8c8" stroke-width="1"/>
<line x1="322.62" y1="510.5" x2="322.62" y2="512.0" stroke="#c8c8c8" stroke-width="1"/>
<line x1="329.20" y1="510.5" x2="329.20" y2="513.0" stroke="#c8c8c8" stroke-width="1"/>
<line x1="335.78" y1="510.5" x2="335.78" y2="512.0" stroke="#c8c8c8" stroke-width="1"/>
<line x1="342.37" y1="510.5" x2="342.37" y2="512.0" stroke="#c8c8c8" stroke-width="1"/>
<line x1="348.95" y1="510.5" x2="348.95" y2="512.0" stroke="#c8c8c8" stroke-width="1"/>
<line x1="355.54" y1="510.5" x2="355.54" y2="512.0" stroke="#c8c8c8" stroke-width="1"/>
<line x1="362.12" y1="510.5" x2="362.12" y2="513.0" stroke="#c8c8c8" stroke-width="1"/>
<line x1="368.70" y1="510.5" x2="368.70" y2="512.0" stroke="#c8c8c8" stroke-width="1"/>
<line x1="375.29" y1="510.5" x2="375.29" y2="512.0" stroke="#c8c8c8" stroke-width="1"/>
<line x1="381.87" y1="510.5" x2="381.87" y2="512.0" stroke="#c8c8c8" stroke-width="1"/>
<line x1="388.46" y1="510.5" x2="388.46" y2="512.0" stroke="#c8c8c8" stroke-width="1"/>
<line x1="395.04" y1="510.5" x2="395.04" y2="513.0" stroke="#c8c8c8" stroke-width="1"/>
<line x1="401.62" y1="510.5" x2="401.62" y2="512.0" stroke="#c8c8c8" stroke-width="1"/>
<line x1="408.21" y1="510.5" x2="408.21" y2="512.0" stroke="#c8c8c8" stroke-width="1"/>
<line x1="414.79" y1="510.5" x2="414.79" y2="512.0" stroke="#c8c8c8" stroke-width="1"/>
<line x1="421.38" y1="510.5" x2="421.38" y2="512.0" stroke="#c8c8c8" stroke-width="1"/>
<line x1="427.96" y1="510.5" x2="427.96" y2="513.0" stroke="#c8c8c8" stroke-width="1"/>
<line x1="434.54" y1="510.5" x2="434.54" y2="512.0" stroke="#c8c8c8" stroke-width="1"/>
<line x1="441.13" y1="510.5" x2="441.13" y2="512.0" stroke="#c8c8c8" stroke-width="1"/>
<line x1="447.71" y1="510.5" x2="447.71" y2="512.0" stroke="#c8c8c8" stroke-width="1"/>
<line x1="454.30" y1="510.5" x2="454.30" y2="512.0" stroke="#c8c8c8" stroke-width="1"/>
<line x1="460.88" y1="510.5" x2="460.88" y2="513.0" stroke="#c8c8c8" stroke-width="1"/>
<line x1="467.46" y1="510.5" x2="467.46" y2="512.0" stroke="#c8c8c8" stroke-width="1"/>
<line x1="474.05" y1="510.5" x2="474.05" y2="512.0" stroke="#c8c8c8" stroke-width="1"/>
<line x1="480.63" y1="510.5" x2="480.63" y2="512.0" stroke="#c8c8c8" stroke-width="1"/>
<line x1="487.22" y1="510.5" x2="487.22" y2="512.0" stroke="#c8c8c8" stroke-width="1"/>
<line x1="493.80" y1="510.5" x2="493.80" y2="513.0" stroke="#c8c8c8" stroke-width="1"/>
<line x1="500.38" y1="510.5" x2="500.38" y2="512.0" stroke="#c8c8c8" stroke-width="1"/>
<line x1="506.97" y1="510.5" x2="506.97" y2="512.0" stroke="#c8c8c8" stroke-width="1"/>
<line x1="513.55" y1="510.5" x2="513.55" y2="512.0" stroke="#c8c8c8" stroke-width="1"/>
<line x1="520.14" y1="510.5" x2="520.14" y2="512.0" stroke="#c8c8c8" stroke-width="1"/>
<line x1="526.72" y1="510.5" x2="526.72" y2="513.0" stroke="#c8c8c8" stroke-width="1"/>
<line x1="533.30" y1="510.5" x2="533.30" y2="512.0" stroke="#c8c8c8" stroke-width="1"/>
<line x1="539.89" y1="510.5" x2="539.89" y2="512.0" stroke="#c8c8c8" stroke-width="1"/>
<line x1="546.47" y1="510.5" x2="546.47" y2="512.0" stroke="#c8c8c8" stroke-width="1"/>
<line x1="553.06" y1="510.5" x2="553.06" y2="512.0" stroke="#c8c8c8" stroke-width="1"/>
<line x1="559.64" y1="510.5" x2="559.64" y2="513.0" stroke="#c8c8c8" stroke-width="1"/>
<line x1="566.22" y1="510.5" x2="566.22" y2="512.0" stroke="#c8c8c8" stroke-width="1"/>
<line x1="572.81" y1="510.5" x2="572.81" y2="512.0" stroke="#c8c8c8" stroke-width="1"/>
<line x1="579.39" y1="510.5" x2="579.39" y2="512.0" stroke="#c8c8c8" stroke-width="1"/>
<line x1="585.98" y1="510.5" x2="585.98" y2="512.0" stroke="#c8c8c8" stroke-width="1"/>
<line x1="592.56" y1="510.5" x2="592.56" y2="513.0" stroke="#c8c8c8" stroke-width="1"/>
<line x1="599.14" y1="510.5" x2="599.14" y2="512.0" stroke="#c8c8c8" stroke-width="1"/>
<line x1="605.73" y1="510.5" x2="605.73" y2="512.0" stroke="#c8c8c8" stroke-width="1"/>
<line x1="612.31" y1="510.5" x2="612.31" y2="512.0" stroke="#c8c8c8" stroke-width="1"/>
<line x1="618.90" y1="510.5" x2="618.90" y2="512.0" stroke="#c8c8c8" stroke-width="1"/>
<line x1="625.48" y1="510.5" x2="625.48" y2="513.0" stroke="#c8c8c8" stroke-width="1"/>
<line x1="632.06" y1="510.5" x2="632.06" y2="512.0" stroke="#c8c8c8" stroke-width="1"/>
<line x1="638.65" y1="510.5" x2="638.65" y2="512.0" stroke="#c8c8c8" stroke-width="1"/>
<line x1="645.23" y1="510.5" x2="645.23" y2="512.0" stroke="#c8c8c8" stroke-width="1"/>
<line x1="651.82" y1="510.5" x2="651.82" y2="512.0" stroke="#c8c8c8" stroke-width="1"/>
<line x1="658.40" y1="510.5" x2="658.40" y2="513.0" stroke="#c8c8c8" stroke-width="1"/>
<line x1="664.98" y1="510.5" x2="664.98" y2="512.0" stroke="#c8c8c8" stroke-width="1"/>
<line x1="671.57" y1="510.5" x2="671.57" y2="512.0" stroke="#c8c8c8" stroke-width="1"/>
<line x1="678.15" y1="510.5" x2="678.15" y2="512.0" stroke="#c8c8c8" stroke-width="1"/>
<line x1="684.74" y1="510.5" x2="684.74" y2="512.0" stroke="#c8c8c8" stroke-width="1"/>
<line x1="691.32" y1="510.5" x2="691.32" y2="513.0" stroke="#c8c8c8" stroke-width="1"/>
<line x1="697.90" y1="510.5" x2="697.90" y2="512.0" stroke="#c8c8c8" stroke-width="1"/>
<line x1="704.49" y1="510.5" x2="704.49" y2="512.0" stroke="#c8c8c8" stroke-width="1"/>
<line x1="711.07" y1="510.5" x2="711.07" y2="512.0" stroke="#c8c8c8" stroke-width="1"/>
<line x1="717.66" y1="510.5" x2="717.66" y2="512.0" stroke="#c8c8c8" stroke-width="1"/>
<line x1="724.24" y1="510.5" x2="724.24" y2="513.0" stroke="#c8c8c8" stroke-width="1"/>
<line x1="730.82" y1="510.5" x2="730.82" y2="512.0" stroke="#c8c8c8" stroke-width="1"/>
<line x1="737.41" y1="510.5" x2="737.41" y2="512.0" stroke="#c8c8c8" stroke-width="1"/>
<line x1="743.99" y1="510.5" x2="743.99" y2="512.0" stroke="#c8c8c8" stroke-width="1"/>
<line x1="750.58" y1="510.5" x2="750.58" y2="512.0" stroke="#c8c8c8" stroke-width="1"/>
<line x1="757.16" y1="510.5" x2="757.16" y2="513.0" stroke="#c8c8c8" stroke-width="1"/>
<line x1="763.74" y1="510.5" x2="763.74" y2="512.0" stroke="#c8c8c8" stroke-width="1"/>
<line x1="770.33" y1="510.5" x2="770.33" y2="512.0" stroke="#c8c8c8" stroke-width="1"/>
<line x1="776.91" y1="510.5" x2="776.91" y2="512.0" stroke="#c8c8c8" stroke-width="1"/>
<line x1="783.50" y1="510.5" x2="783.50" y2="512.0" stroke="#c8c8c8" stroke-width="1"/>
<line x1="790.08" y1="510.5" x2="790.08" y2="513.0" stroke="#c8c8c8" stroke-width="1"/>
<line x1="796.66" y1="510.5" x2="796.66" y2="512.0" stroke="#c8c8c8" stroke-width="1"/>
<line x1="803.25" y1="510.5" x2="803.25" y2="512.0" stroke="#c8c8c8" stroke-width="1"/>
<line x1="809.83" y1="510.5" x2="809.83" y2="512.0" stroke="#c8c8c8" stroke-width="1"/>
<line x1="816.42" y1="510.5" x2="816.42" y2="512.0" stroke="#c8c8c8" stroke-width="1"/>
<line x1="823.00" y1="510.5" x2="823.00" y2="513.0" stroke="#c8c8c8" stroke-width="1"/>
<line x1="829.58" y1="510.5" x2="829.58" y2="512.0" stroke="#c8c8c8" stroke-width="1"/>
<line x1="836.17" y1="510.5" x2="836.17" y2="512.0" stroke="#c8c8c8" stroke-width="1"/>
<line x1="842.75" y1="510.5" x2="842.75" y2="512.0" stroke="#c8c8c8" stroke-width="1"/>
<line x1="849.34" y1="510.5" x2="849.34" y2="512.0" stroke="#c8c8c8" stroke-width="1"/>
<line x1="855.92" y1="510.5" x2="855.92" y2="513.0" stroke="#c8c8c8" stroke-width="1"/>
<line x1="862.50" y1="510.5" x2="862.50" y2="512.0" stroke="#c8c8c8" stroke-width="1"/>
<line x1="869.09" y1="510.5" x2="869.09" y2="512.0" stroke="#c8c8c8" stroke-width="1"/>
<line x1="875.67" y1="510.5" x2="875.67" y2="512.0" stroke="#c8c8c8" stroke-width="1"/>
<line x1="882.26" y1="510.5" x2="882.26" y2="512.0" stroke="#c8c8c8" stroke-width="1"/>
<line x1="888.84" y1="510.5" x2="888.84" y2="513.0" stroke="#c8c8c8" stroke-width="1"/>
<line x1="895.42" y1="510.5" x2="895.42" y2="512.0" stroke="#c8c8c8" stroke-width="1"/>
<line x1="902.01" y1="510.5" x2="902.01" y2="512.0" stroke="#c8c8c8" stroke-width="1"/>
<line x1="908.59" y1="510.5" x2="908.59" y2="512.0" stroke="#c8c8c8" stroke-width="1"/>
<line x1="915.18" y1="510.5" x2="915.18" y2="512.0" stroke="#c8c8c8" stroke-width="1"/>
<line x1="921.76" y1="510.5" x2="921.76" y2="513.0" stroke="#c8c8c8" stroke-width="1"/>
<line x1="928.34" y1="510.5" x2="928.34" y2="512.0" stroke="#c8c8c8" stroke-width="1"/>
<line x1="934.93" y1="510.5" x2="934.93" y2="512.0" stroke="#c8c8c8" stroke-width="1"/>
<line x1="941.51" y1="510.5" x2="941.51" y2="512.0" stroke="#c8c8c8" stroke-width="1"/>
<line x1="948.10" y1="510.5" x2="948.10" y2="512.0" stroke="#c8c8c8" stroke-width="1"/>
<line x1="954.68" y1="510.5" x2="954.68" y2="513.0" stroke="#c8c8c8" stroke-width="1"/>
<text x="164.60" y="522" text-anchor="middle" class="xl">00</text>
<text x="197.52" y="522" text-anchor="middle" class="xl">01</text>
<text x="230.44" y="522" text-anchor="middle" class="xl">02</text>
<text x="263.36" y="522" text-anchor="middle" class="xl">03</text>
<text x="296.28" y="522" text-anchor="middle" class="xl">04</text>
<text x="329.20" y="522" text-anchor="middle" class="xl">05</text>
<text x="362.12" y="522" text-anchor="middle" class="xl">06</text>
<text x="395.04" y="522" text-anchor="middle" class="xl">07</text>
<text x="427.96" y="522" text-anchor="middle" class="xl">08</text>
<text x="460.88" y="522" text-anchor="middle" class="xl">09</text>
<text x="493.80" y="522" text-anchor="middle" class="xl">10</text>
<text x="526.72" y="522" text-anchor="middle" class="xl">11</text>
<text x="559.64" y="522" text-anchor="middle" class="xl">12</text>
<text x="592.56" y="522" text-anchor="middle" class="xl">13</text>
<text x="625.48" y="522" text-anchor="middle" class="xl">14</text>
<text x="658.40" y="522" text-anchor="middle" class="xl">15</text>
<text x="691.32" y="522" text-anchor="middle" class="xl">16</text>
<text x="724.24" y="522" text-anchor="middle" class="xl">17</text>
<text x="757.16" y="522" text-anchor="middle" class="xl">18</text>
<text x="790.08" y="522" text-anchor="middle" class="xl">19</text>
<text x="823.00" y="522" text-anchor="middle" class="xl">20</text>
<text x="855.92" y="522" text-anchor="middle" class="xl">21</text>
<text x="888.84" y="522" text-anchor="middle" class="xl">22</text>
<text x="921.76" y="522" text-anchor="middle" class="xl">23</text>
<text x="954.68" y="522" text-anchor="middle" class="xl">00</text><rect x="164.80" y="471.41" width="2" height="23.19" fill="#2d76b6"/>
<rect x="173.03" y="469.85" width="2" height="24.75" fill="#2d76b6"/>
<rect x="181.26" y="446.97" width="2" height="47.63" fill="#2d76b6"/>
<rect x="189.49" y="473.07" width="2" height="21.53" fill="#2d76b6"/>
<rect x="197.72" y="440.62" width="2" height="53.98" fill="#2d76b6"/>
<rect x="205.95" y="470.26" width="2" height="24.34" fill="#2d76b6"/>
<rect x="214.18" y="480.66" width="2" height="13.94" fill="#2d76b6"/>
<rect x="222.41" y="432.41" width="2" height="62.19" fill="#2d76b6"/>
<rect x="230.64" y="470.78" width="2" height="23.82" fill="#2d76b6"/>
<rect x="247.10" y="472.55" width="2" height="22.05" fill="#2d76b6"/>
<rect x="255.33" y="459.76" width="2" height="34.84" fill="#2d76b6"/>
<rect x="263.56" y="465.69" width="2" height="28.91" fill="#2d76b6"/>
<rect x="271.79" y="472.55" width="2" height="22.05" fill="#2d76b6"/>
<rect x="280.02" y="438.96" width="2" height="55.64" fill="#2d76b6"/>
<rect x="288.25" y="481.81" width="2" height="12.79" fill="#2d76b6"/>
<rect x="296.48" y="479.21" width="2" height="15.39" fill="#2d76b6"/>
<rect x="304.71" y="475.36" width="2" height="19.24" fill="#2d76b6"/>
<rect x="312.94" y="448.63" width="2" height="45.97" fill="#2d76b6"/>
<rect x="321.17" y="446.14" width="2" height="48.46" fill="#2d76b6"/>
<rect x="329.40" y="442.70" width="2" height="51.90" fill="#2d76b6"/>
<rect x="337.63" y="459.76" width="2" height="34.84" fill="#2d76b6"/>
<rect x="345.86" y="465.48" width="2" height="29.12" fill="#2d76b6"/>
<rect x="354.09" y="432.41" width="2" height="62.19" fill="#2d76b6"/>
<rect x="362.32" y="432.41" width="2" height="62.19" fill="#2d76b6"/>
<rect x="370.55" y="482.43" width="2" height="12.17" fill="#2d76b6"/>
<rect x="378.78" y="434.59" width="2" height="60.01" fill="#2d76b6"/>
<rect x="392.74" y="420.86" width="2" height="73.74" fill="#0a7a0a"/>
<rect x="395.24" y="442.70" width="2" height="51.90" fill="#2d76b6"/>
<rect x="400.97" y="427.31" width="2" height="67.29" fill="#0a7a0a"/>
<rect x="409.20" y="459.45" width="2" height="35.15" fill="#0a7a0a"/>
<rect x="411.70" y="451.65" width="2" height="42.95" fill="#2d76b6"/>
<rect x="417.43" y="431.06" width="2" height="63.54" fill="#0a7a0a"/>
<rect x="419.93" y="452.17" width="2" height="42.43" fill="#2d76b6"/>
<rect x="425.66" y="410.15" width="2" height="84.45" fill="#0a7a0a"/>
<rect x="433.89" y="427.83" width="2" height="66.77" fill="#0a7a0a"/>
<rect x="436.39" y="468.60" width="2" height="26.00" fill="#2d76b6"/>
<rect x="442.12" y="414.42" width="2" height="80.18" fill="#0a7a0a"/>
<rect x="450.35" y="413.06" width="2" height="81.54" fill="#0a7a0a"/>
<rect x="452.85" y="447.49" width="2" height="47.11" fill="#2d76b6"/>
<rect x="458.58" y="457.58" width="2" height="37.02" fill="#0a7a0a"/>
<rect x="461.08" y="452.79" width="2" height="41.81" fill="#2d76b6"/>
<rect x="466.81" y="427.73" width="2" height="66.87" fill="#0a7a0a"/>
<rect x="469.31" y="461.01" width="2" height="33.59" fill="#2d76b6"/>
<rect x="475.04" y="442.70" width="2" height="51.90" fill="#0a7a0a"/>
<rect x="477.54" y="443.64" width="2" height="50.96" fill="#2d76b6"/>
<rect x="483.27" y="442.70" width="2" height="51.90" fill="#0a7a0a"/>
<rect x="485.77" y="458.72" width="2" height="35.88" fill="#2d76b6"/>
<rect x="491.50" y="450.50" width="2" height="44.10" fill="#0a7a0a"/>
<rect x="494.00" y="476.19" width="2" height="18.41" fill="#2d76b6"/>
<rect x="499.73" y="463.19" width="2" height="31.41" fill="#0a7a0a"/>
<rect x="502.23" y="461.74" width="2" height="32.86" fill="#2d76b6"/>
<rect x="507.96" y="443.64" width="2" height="50.96" fill="#0a7a0a"/>
<rect x="516.19" y="458.10" width="2" height="36.50" fill="#0a7a0a"/>
<rect x="524.42" y="420.86" width="2" height="73.74" fill="#0a7a0a"/>
<rect x="526.92" y="479.00" width="2" height="15.60" fill="#2d76b6"/>
<rect x="532.65" y="422.32" width="2" height="72.28" fill="#0a7a0a"/>
<rect x="540.88" y="410.15" width="2" height="84.45" fill="#0a7a0a"/>
<rect x="549.11" y="425.54" width="2" height="69.06" fill="#0a7a0a"/>
<rect x="551.61" y="469.85" width="2" height="24.75" fill="#2d76b6"/>
<rect x="557.34" y="449.36" width="2" height="45.24" fill="#0a7a0a"/>
<rect x="559.84" y="466.62" width="2" height="27.98" fill="#2d76b6"/>
<rect x="565.57" y="424.09" width="2" height="70.51" fill="#0a7a0a"/>
<rect x="568.07" y="470.99" width="2" height="23.61" fill="#2d76b6"/>
<rect x="573.80" y="418.37" width="2" height="76.23" fill="#0a7a0a"/>
<rect x="576.30" y="437.92" width="2" height="56.68" fill="#2d76b6"/>
<rect x="582.03" y="432.41" width="2" height="62.19" fill="#0a7a0a"/>
<rect x="584.53" y="437.92" width="2" height="56.68" fill="#2d76b6"/>
<rect x="590.26" y="459.97" width="2" height="34.63" fill="#0a7a0a"/>
<rect x="592.76" y="474.11" width="2" height="20.49" fill="#2d76b6"/>
<rect x="598.49" y="443.85" width="2" height="50.75" fill="#0a7a0a"/>
<rect x="600.99" y="433.24" width="2" height="61.36" fill="#2d76b6"/>
<rect x="606.72" y="418.37" width="2" height="76.23" fill="#0a7a0a"/>
<rect x="609.22" y="456.22" width="2" height="38.38" fill="#2d76b6"/>
<rect x="614.95" y="418.37" width="2" height="76.23" fill="#0a7a0a"/>
<rect x="617.45" y="460.38" width="2" height="34.22" fill="#2d76b6"/>
<rect x="623.18" y="401.42" width="2" height="93.18" fill="#0a7a0a"/>
<rect x="625.68" y="472.55" width="2" height="22.05" fill="#2d76b6"/>
<rect x="631.41" y="424.61" width="2" height="69.99" fill="#0a7a0a"/>
<rect x="633.91" y="446.14" width="2" height="48.46" fill="#2d76b6"/>
<rect x="639.64" y="432.41" width="2" height="62.19" fill="#0a7a0a"/>
<rect x="642.14" y="443.12" width="2" height="51.48" fill="#2d76b6"/>
<rect x="647.87" y="437.19" width="2" height="57.41" fill="#0a7a0a"/>
<rect x="650.37" y="482.43" width="2" height="12.17" fill="#2d76b6"/>
<rect x="656.10" y="460.38" width="2" height="34.22" fill="#0a7a0a"/>
<rect x="664.33" y="406.72" width="2" height="87.88" fill="#0a7a0a"/>
<rect x="666.83" y="481.91" width="2" height="12.69" fill="#2d76b6"/>
<rect x="672.56" y="418.78" width="2" height="75.82" fill="#0a7a0a"/>
<rect x="675.06" y="463.82" width="2" height="30.78" fill="#2d76b6"/>
<rect x="680.79" y="401.42" width="2" height="93.18" fill="#0a7a0a"/>
<rect x="683.29" y="473.70" width="2" height="20.90" fill="#2d76b6"/>
<rect x="689.02" y="446.66" width="2" height="47.94" fill="#0a7a0a"/>
<rect x="691.52" y="437.19" width="2" height="57.41" fill="#2d76b6"/>
<rect x="697.25" y="409.01" width="2" height="85.59" fill="#0a7a0a"/>
<rect x="699.75" y="474.84" width="2" height="19.76" fill="#2d76b6"/>
<rect x="705.48" y="402.35" width="2" height="92.25" fill="#0a7a0a"/>
<rect x="713.71" y="410.15" width="2" height="84.45" fill="#0a7a0a"/>
<rect x="716.21" y="434.49" width="2" height="60.11" fill="#2d76b6"/>
<rect x="721.94" y="438.13" width="2" height="56.47" fill="#0a7a0a"/>
<rect x="724.44" y="481.29" width="2" height="13.31" fill="#2d76b6"/>
<rect x="730.17" y="408.07" width="2" height="86.53" fill="#0a7a0a"/>
<rect x="738.40" y="446.14" width="2" height="48.46" fill="#0a7a0a"/>
<rect x="746.63" y="447.07" width="2" height="47.53" fill="#0a7a0a"/>
<rect x="749.13" y="441.14" width="2" height="53.46" fill="#2d76b6"/>
<rect x="754.86" y="409.01" width="2" height="85.59" fill="#0a7a0a"/>
<rect x="757.36" y="449.36" width="2" height="45.24" fill="#2d76b6"/>
<rect x="763.09" y="430.74" width="2" height="63.86" fill="#0a7a0a"/>
<rect x="765.59" y="456.95" width="2" height="37.65" fill="#2d76b6"/>
<rect x="771.32" y="451.23" width="2" height="43.37" fill="#0a7a0a"/>
<rect x="773.82" y="450.50" width="2" height="44.10" fill="#2d76b6"/>
<rect x="779.55" y="445.20" width="2" height="49.40" fill="#0a7a0a"/>
<rect x="782.05" y="436.78" width="2" height="57.82" fill="#2d76b6"/>
<rect x="790.28" y="437.19" width="2" height="57.41" fill="#2d76b6"/>
<rect x="798.51" y="481.29" width="2" height="13.31" fill="#2d76b6"/>
<rect x="806.74" y="441.14" width="2" height="53.46" fill="#2d76b6"/>
<rect x="814.97" y="467.98" width="2" height="26.62" fill="#2d76b6"/>
<rect x="823.20" y="471.82" width="2" height="22.78" fill="#2d76b6"/>
<rect x="831.43" y="460.38" width="2" height="34.22" fill="#2d76b6"/>
<rect x="839.66" y="442.08" width="2" height="52.52" fill="#2d76b6"/>
<rect x="847.89" y="458.51" width="2" height="36.09" fill="#2d76b6"/>
<rect x="856.12" y="467.04" width="2" height="27.56" fill="#2d76b6"/>
<rect x="872.58" y="462.67" width="2" height="31.93" fill="#2d76b6"/>
<rect x="880.81" y="468.60" width="2" height="26.00" fill="#2d76b6"/>
<rect x="889.04" y="467.25" width="2" height="27.35" fill="#2d76b6"/>
<rect x="897.27" y="445.72" width="2" height="48.88" fill="#2d76b6"/>
<rect x="905.50" y="469.12" width="2" height="25.48" fill="#2d76b6"/>
<rect x="913.73" y="448.63" width="2" height="45.97" fill="#2d76b6"/>
<rect x="930.19" y="447.18" width="2" height="47.42" fill="#2d76b6"/>
<rect x="938.42" y="437.30" width="2" height="57.30" fill="#2d76b6"/>
<rect x="946.65" y="444.26" width="2" height="50.34" fill="#2d76b6"/></svg><div class="a" style="left:967.4px;top:319.4px;width:78px;height:30.8px;background:#fff;border:1px solid #e6e6e6"></div><div class="a" style="left:974px;top:325.6px;width:9.8px;height:7.2px;background:#008000"></div><div class="a" style="left:974px;top:335.6px;width:9.8px;height:7.2px;background:#4682b4"></div><div class="t" style="left:986.50px;top:326.80px;font-size:6.5px;color:#333;transform:scaleX(0.9033);">Puissance Solaire</div><div class="t" style="left:986.50px;top:336.80px;font-size:6.5px;color:#333;transform:scaleX(0.8976);">Puissance Eolienne</div><div class="t" style="left:541.90px;top:527.12px;font-size:8.6px;color:#333;transform:scaleX(0.9450);">Heures</div><div class="combo" style="left:228.75px;top:543.1px;width:115.00px;height:19.5px;background:#fff;border-color:#c9c9c9"></div><div class="dd" style="left:338.25px;top:552.5px;background:#444"></div><div class="combo" style="left:377px;top:543.1px;width:119.25px;height:19.5px;background:#fff;border-color:#c9c9c9"></div><div class="dd" style="left:490.75px;top:552.5px;background:#444"></div><div class="combo" style="left:535px;top:543.1px;width:104.25px;height:19.5px;background:#fff;border-color:#c9c9c9"></div><div class="dd" style="left:633.75px;top:552.5px;background:#444"></div><div class="combo" style="left:671.4px;top:543.1px;width:110.20px;height:19.5px;background:#fff;border-color:#c9c9c9"></div><div class="dd" style="left:776.10px;top:552.5px;background:#444"></div><div class="combo" style="left:853.2px;top:543.1px;width:79.50px;height:19.5px;background:#f0f0f0;border-color:#c4c4c4"></div><div class="dd" style="left:927.20px;top:552.5px;background:#aaa"></div><div class="t" style="left:188.00px;top:548.64px;font-size:12px;font-weight:bold;color:#1a1a1a;transform:scaleX(0.9892);">Wilaya</div><div class="t" style="left:347.00px;top:548.64px;font-size:12px;font-weight:bold;color:#1a1a1a;transform:scaleX(0.9557);">Mun.</div><div class="t" style="left:499.25px;top:548.64px;font-size:12px;font-weight:bold;color:#1a1a1a;transform:scaleX(0.9818);">Deyra</div><div class="t" style="left:641.75px;top:548.64px;font-size:12px;font-weight:bold;color:#1a1a1a;transform:scaleX(0.9245);">Zone</div><div class="t" style="left:784.00px;top:548.22px;font-size:12.5px;font-weight:bold;color:#6d6d6d;transform:scaleX(1.0605);">Compteur</div><div class="t" style="left:251.25px;top:548.77px;font-size:10.2px;color:#4a4a58;transform:scaleX(1.0095);">Tous</div><div class="t" style="left:398.80px;top:548.77px;font-size:10.2px;color:#4a4a58;transform:scaleX(1.0095);">Tous</div><div class="t" style="left:557.30px;top:548.77px;font-size:10.2px;color:#4a4a58;transform:scaleX(1.0095);">Tous</div><div class="t" style="left:694.00px;top:548.77px;font-size:10.2px;color:#4a4a58;transform:scaleX(1.0095);">Tous</div><svg class="a" style="left:234.5px;top:545px" width="12" height="16" viewBox="0 0 12 16"><path d="M6 15.5 C3 11 0.8 8.2 0.8 5.6 A5.2 5.2 0 0 1 11.2 5.6 C11.2 8.2 9 11 6 15.5 Z" fill="#4a90d9"/><circle cx="6" cy="5.6" r="2" fill="#fff"/></svg><svg class="a" style="left:380px;top:543px" width="17" height="20" viewBox="0 0 17 20"><ellipse cx="7.9" cy="4.6" rx="2.5" ry="3.3" fill="#555a66"/><path d="M3.3 11 Q3.8 8.3 6.5 8.1 H9.5 Q12.4 8.3 12.9 11 Z" fill="#555a66"/><rect x="0.75" y="12.1" width="15.55" height="6.9" fill="#f39020"/><rect x="3" y="15" width="6.7" height="4" fill="#fff"/></svg><svg class="a" style="left:538.5px;top:545px" width="16" height="16" viewBox="0 0 16 16"><circle cx="8" cy="8" r="7.6" fill="#3d85d0"/><path d="M2.4 4.6 Q4.6 1.4 8.6 1.3 Q9.6 1.5 9.8 2.1 Q8.2 3 7.9 4.3 Q8.6 5.6 7.3 7.2 Q5.6 7.9 4.3 6.4 Q3 5.6 2.4 4.6 Z" fill="#fff"/><path d="M6.2 8.4 Q8.8 7.9 10.3 9.4 Q10.7 10.8 9.3 12.3 Q8.4 13.8 7.6 14.8 Q7 13.2 6.9 11.9 Q6 10.6 6.2 8.4 Z" fill="#fff"/></svg><svg class="a" style="left:675px;top:545px" width="16" height="16" viewBox="0 0 16 16"><circle cx="4.2" cy="2.6" r="2.3" fill="#d9302c"/><circle cx="11.5" cy="5" r="2.6" fill="#4a90d9"/><circle cx="4.6" cy="11" r="4.4" fill="#f0a030"/><circle cx="12" cy="12" r="1.5" fill="#2fa84f"/></svg><div class="t" style="left:959.00px;top:564.15px;font-size:14px;color:#b0b0b0;">Activer Windows</div></body></html>
